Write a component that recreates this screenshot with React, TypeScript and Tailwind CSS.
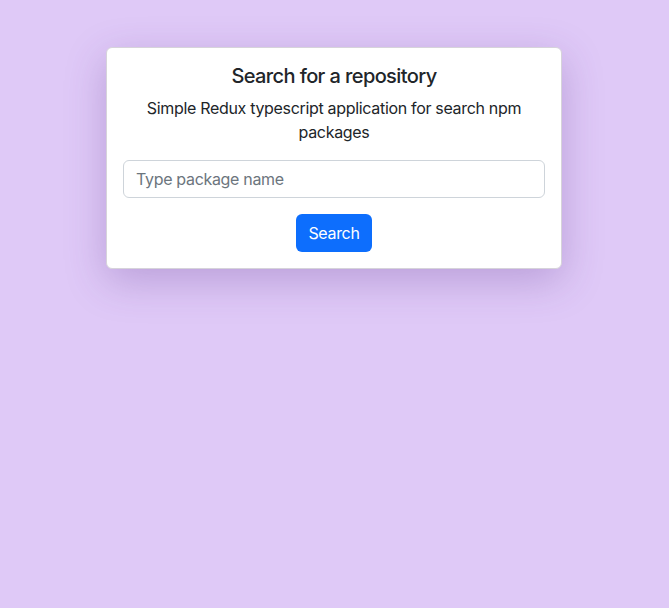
import React, { useState } from 'react';

const App = () => {
  const [query, setQuery] = useState('');

  return (
    <div
      className="min-h-[608px] w-full bg-[#dfc9f7] pt-[47px]"
      style={{ fontFamily: 'Inter, "Noto Sans", sans-serif' }}
    >
      {/* Search card */}
      <div className="ml-[106px] w-[456px] rounded-md border border-[#d6d3da] bg-white p-4 text-center text-[#212529] shadow-[0_12px_40px_rgba(90,50,140,0.28)]">
        <h1 className="mb-2 text-[20px] leading-[24px] font-medium tracking-[-0.03em]">Search for a repository</h1>
        <p className="mb-4 text-[16px] leading-6 tracking-[-0.02em]">
          Simple Redux typescript application for search npm packages
        </p>
        <input
          value={query}
          onChange={(e) => setQuery(e.target.value)}
          placeholder="Type package name"
          className="block h-[38px] w-full rounded-md border border-[#ced4da] px-3 text-[16px] tracking-[-0.02em] text-[#212529] outline-none placeholder:text-[#6c757d]"
        />
        <button className="mt-4 h-[38px] rounded-md bg-[#0d6efd] px-3 text-[16px] tracking-[-0.02em] text-white">
          Search
        </button>
      </div>
    </div>
  );
};

export default App;
